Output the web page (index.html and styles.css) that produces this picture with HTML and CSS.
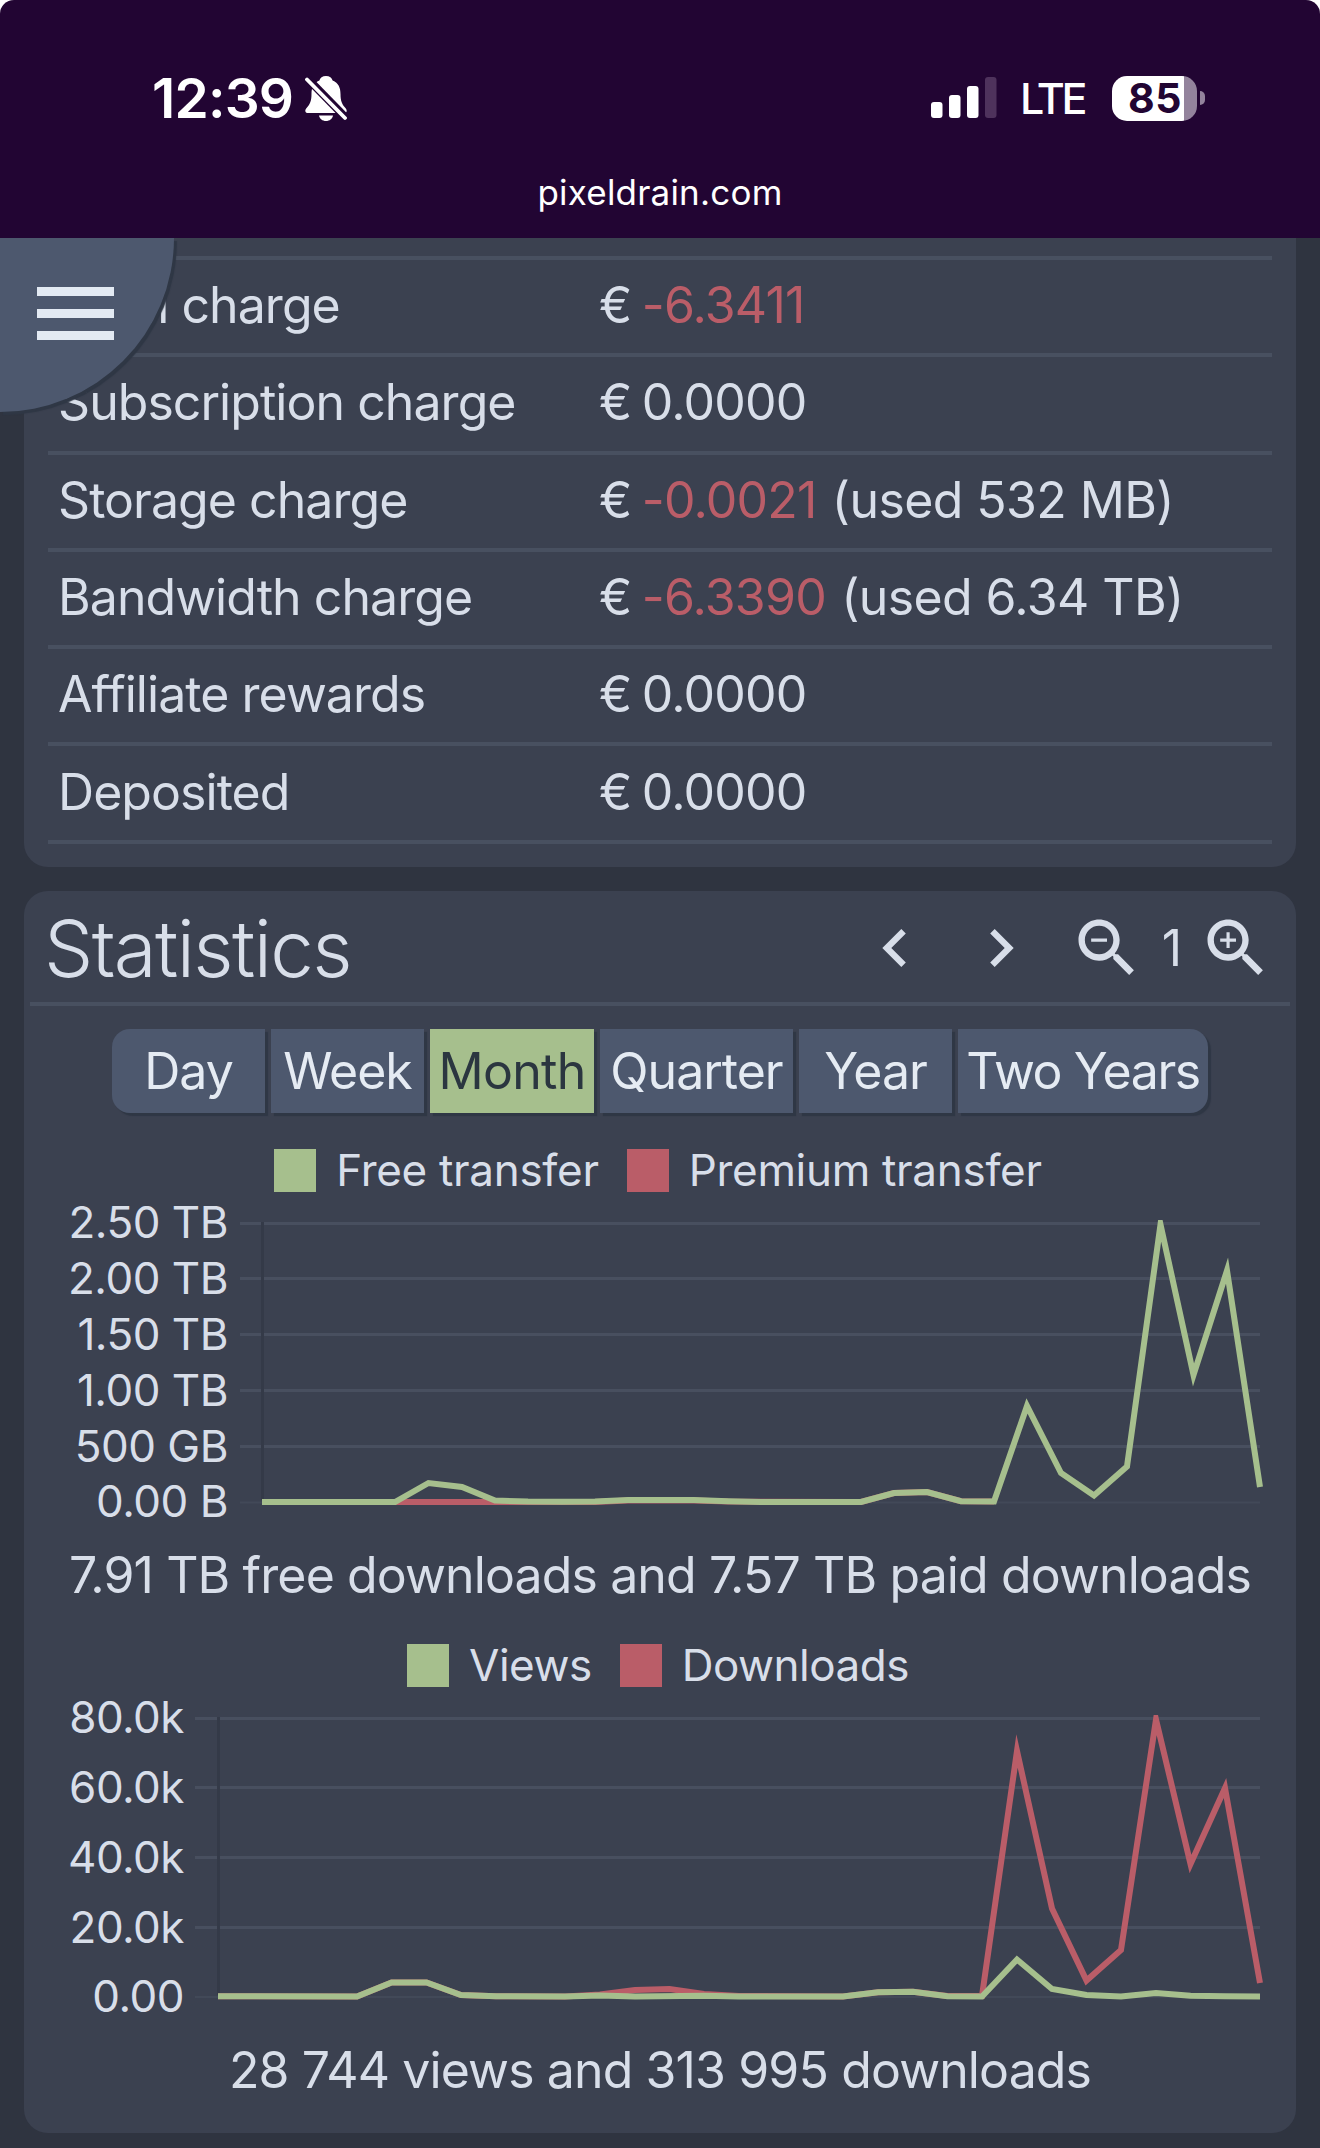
FILE: index.html
```
<!DOCTYPE html>
<html lang="en">
<head>
<meta charset="UTF-8" />
<meta name="viewport" content="width=device-width, initial-scale=1" />
<title>pixeldrain.com</title>
<link rel="stylesheet" href="styles.css">
</head>
<body>

<header class="phone-bar">
  <div class="status-row">
    <div class="clock">
      <span class="time">12:39</span>
      <svg class="bell" viewBox="0 0 42 45" aria-label="Silent">
        <path fill="#fff" d="M21 0c-3.600 0-6 2-6.600 4.600C8.500 7 6.500 12 6.500 18c0 7-1.500 10-4.500 13.500-1.200 1.500-2 2.800-1.600 4C.8 36.500 1.700 37 3 37h36c1.300 0 2.200-.5 2.600-1.500.4-1.200-.4-2.500-1.600-4-3-3.500-4.500-6.500-4.500-13.500 0-6-2-11-7.900-13.400C27 2 24.600 0 21 0z"/>
        <path fill="#fff" d="M14 39.500h14c-.6 3.300-3.500 5.500-7 5.500s-6.400-2.200-7-5.500z"/>
        <path stroke="#220533" stroke-width="8" d="M1.500 1.500l40 41"/>
        <path stroke="#fff" stroke-width="3.800" stroke-linecap="round" d="M2 3.500l38 38.500"/>
      </svg>
    </div>
    <div class="signals">
      <svg class="bars" viewBox="0 0 66 42" aria-label="Signal">
        <rect x="0" y="25" width="11.500" height="16" rx="3" fill="#fff"/>
        <rect x="18" y="18" width="11.500" height="23" rx="3" fill="#fff"/>
        <rect x="36" y="9" width="11.500" height="32" rx="3" fill="#fff"/>
        <rect x="54" y="0" width="11.500" height="41" rx="3" fill="#4e325c"/>
      </svg>
      <span class="lte">LTE</span>
      <div class="battery"><span>85</span></div>
      <div class="battery-tip"></div>
    </div>
  </div>
  <div class="address">pixeldrain.com</div>
</header>

<button class="menu-btn" aria-label="Menu">
  <span></span>
  <span></span>
  <span></span>
</button>

<main>
  <section class="panel charges">
    <table>
      <tr><td>Total charge</td><td>€ <span class="amount red">-6.3411</span></td></tr>
      <tr><td>Subscription charge</td><td>€ <span class="amount">0.0000</span></td></tr>
      <tr><td>Storage charge</td><td>€ <span class="amount red">-0.0021</span> <span class="used">(used 532 MB)</span></td></tr>
      <tr><td>Bandwidth charge</td><td>€ <span class="amount red">-6.3390</span> <span class="used">(used 6.34 TB)</span></td></tr>
      <tr><td>Affiliate rewards</td><td>€ <span class="amount">0.0000</span></td></tr>
      <tr><td>Deposited</td><td>€ <span class="amount">0.0000</span></td></tr>
    </table>
  </section>

  <section class="panel stats">
    <div class="stats-header">
      <h2>Statistics</h2>
      <div class="tools">
        <svg class="icon" viewBox="0 0 24 24"><path d="M15.410 7.410L14 6l-6 6 6 6 1.410-1.410L10.830 12z"/></svg>
        <svg class="icon" viewBox="0 0 24 24"><path d="M10 6L8.590 7.410 13.170 12l-4.580 4.590L10 18l6-6z"/></svg>
        <svg class="icon" viewBox="0 0 24 24"><path d="M15.500 14h-.79l-.28-.27C15.410 12.590 16 11.110 16 9.500 16 5.910 13.090 3 9.500 3S3 5.910 3 9.500 5.910 16 9.500 16c1.610 0 3.090-.59 4.230-1.570l.27.28v.79l5 4.990L20.490 19l-4.990-5zm-6 0C7.010 14 5 11.990 5 9.500S7.010 5 9.500 5 14 7.010 14 9.500 11.990 14 9.500 14zM7 9h5v1H7z"/></svg>
        <span class="level">1</span>
        <svg class="icon" viewBox="0 0 24 24"><path d="M15.500 14h-.79l-.28-.27C15.410 12.590 16 11.110 16 9.500 16 5.910 13.090 3 9.500 3S3 5.910 3 9.500 5.910 16 9.500 16c1.610 0 3.090-.59 4.230-1.570l.27.28v.79l5 4.990L20.490 19l-4.990-5zm-6 0C7.010 14 5 11.990 5 9.500S7.010 5 9.500 5 14 7.010 14 9.500 11.990 14 9.500 14zm2.500-4h-2v2H9v-2H7V9h2V7h1v2h2v1z"/></svg>
      </div>
    </div>

    <div class="tabs">
      <button>Day</button>
      <button>Week</button>
      <button class="active">Month</button>
      <button>Quarter</button>
      <button>Year</button>
      <button class="wide">Two Years</button>
    </div>

    <div class="legend legend-transfer">
      <i class="swatch green"></i><span>Free transfer</span>
      <i class="swatch pink"></i><span>Premium transfer</span>
    </div>

    <svg class="chart" viewBox="24 1195 1272 330">
      <defs><clipPath id="clipTransfer"><rect x="262" y="1220" width="1004" height="290"/></clipPath></defs>
      <g class="grid">
        <path d="M240 1223.500H1260M240 1278.500H1260M240 1334.500H1260M240 1390.500H1260M240 1446.500H1260"/>
        <path class="zero" d="M240 1502.500H1260"/>
        <path class="axis" d="M262.500 1222V1500"/>
      </g>
      <g class="labels">
        <text x="228" y="1238">2.50 TB</text>
        <text x="228" y="1294">2.00 TB</text>
        <text x="228" y="1350">1.50 TB</text>
        <text x="228" y="1406">1.00 TB</text>
        <text x="228" y="1462">500 GB</text>
        <text x="228" y="1517">0.00 B</text>
      </g>
      <g clip-path="url(#clipTransfer)">
        <polyline class="line pink" points="262,1502 595,1502 628,1500.500 694,1500.500 728,1501.500 861,1502 894,1493 927,1492 961,1501.200 994,1501.500"/>
        <polyline class="line green" points="262,1502 395,1502 428.500,1483 462,1487 495,1500.500 528,1501.500 562,1501.700 595,1501.500 628,1500 661,1500 694,1500 728,1501.300 761,1502 861,1502 894,1493 927,1492 961,1501.200 994,1501.500 1027,1406 1061,1473 1094,1495.500 1127,1466.500 1160.500,1224.500 1193.500,1375 1227,1270.500 1260,1487"/>
      </g>
    </svg>
    <p class="summary">7.91 TB free downloads and 7.57 TB paid downloads</p>

    <div class="legend legend-views">
      <i class="swatch green"></i><span>Views</span>
      <i class="swatch pink"></i><span>Downloads</span>
    </div>

    <svg class="chart" viewBox="24 1690 1272 330">
      <defs><clipPath id="clipViews"><rect x="218" y="1715" width="1048" height="290"/></clipPath></defs>
      <g class="grid">
        <path d="M195 1718.500H1260M195 1787.500H1260M195 1857.500H1260M195 1927.500H1260"/>
        <path class="zero" d="M195 1997H1260"/>
        <path class="axis" d="M218.500 1717V1995"/>
      </g>
      <g class="labels">
        <text x="184" y="1733">80.0k</text>
        <text x="184" y="1803">60.0k</text>
        <text x="184" y="1873">40.0k</text>
        <text x="184" y="1943">20.0k</text>
        <text x="184" y="2012">0.00</text>
      </g>
      <g clip-path="url(#clipViews)">
        <polyline class="line pink" points="218,1996.200 357,1996.500 391.600,1982.500 426.500,1982.500 461,1995 496,1996.200 565,1996.400 600,1994.500 635,1990 669.500,1989 704,1994 739,1996 843,1996.500 878,1992.300 913,1991.700 947.500,1996 982,1996 1017,1751 1052,1908.500 1086.500,1980.500 1121,1950 1156,1719.500 1190.500,1864 1225,1788 1260,1983"/>
        <polyline class="line green" points="218,1996.200 357,1996.500 391.600,1982.500 426.500,1982.500 461,1995 496,1996.200 565,1996.400 600,1995.500 635,1996.500 704,1995.800 739,1996.500 843,1996.500 878,1992.300 913,1991.700 947.500,1996.300 982,1996.500 1017,1959.500 1052,1989 1086.500,1995 1121,1996.500 1156,1993 1190.500,1995.800 1225,1996.300 1260,1996.500"/>
      </g>
    </svg>
    <p class="summary">28 744 views and 313 995 downloads</p>
  </section>
</main>

</body>
</html>
```
FILE: styles.css
```
html {
  background: #fff;
}

body {
  font-family: Inter, "Liberation Sans", sans-serif;
  font-size: 50px;
  letter-spacing: -0.8px;
  margin: 0;
  width: 1320px;
  height: 2148px;
  overflow: hidden;
  color: #d8dee9;
}

/* Phone status bar */
.phone-bar {
  box-sizing: border-box;
  height: 238px;
  padding-top: 66px;
  background: #220533;
  border-radius: 14px 14px 0 0;
  color: #fff;
}

.status-row {
  display: flex;
  justify-content: space-between;
  height: 64px;
  padding: 0 115px 0 152px;
}

.clock,
.signals {
  display: flex;
  align-items: center;
}

.time {
  font-size: 55px;
  font-weight: 600;
  line-height: 64px;
  letter-spacing: -0.8px;
}

.bell {
  width: 42px;
  height: 45px;
  margin-left: 12px;
}

.bars {
  width: 66px;
  height: 42px;
}

.lte {
  font-size: 43px;
  font-weight: 500;
  letter-spacing: -3.4px;
  margin-left: 23px;
}

.battery {
  width: 85px;
  height: 45px;
  margin-left: 28px;
  border-radius: 15px;
  background: linear-gradient(to right, #fff 72px, #93839c 72px);
  color: #220533;
  font-size: 41px;
  font-weight: 700;
  letter-spacing: 0.5px;
  line-height: 44px;
}

.battery span {
  margin-left: 16px;
}

.battery-tip {
  width: 5px;
  height: 14px;
  margin-left: 3px;
  border-radius: 0 5px 5px 0;
  background: #93839c;
}

.address {
  margin-top: 41px;
  font-size: 35px;
  letter-spacing: 0.2px;
  line-height: 42px;
  text-align: center;
}

/* Menu button, floats over the page */
.menu-btn {
  position: absolute;
  top: 238px;
  left: 0;
  width: 174px;
  height: 174px;
  display: flex;
  flex-direction: column;
  gap: 13px;
  padding: 49px 0 0 37px;
  border: none;
  border-radius: 0 0 174px 0;
  background: #4d586e;
  box-shadow: 3px 3px 1px #2f3745;
  clip-path: inset(0 -10px -10px 0);
}

.menu-btn span {
  width: 77px;
  height: 9px;
  background: #e3eaf3;
}

/* Page */
main {
  display: flex;
  flex-direction: column;
  gap: 24px;
  box-sizing: border-box;
  height: 1910px;
  padding: 0 24px;
  background: #2f3440;
}

.panel {
  box-sizing: border-box;
  background: #3b4150;
  border-radius: 24px;
}

.charges {
  height: 629px;
  padding: 18px 24px 0;
  border-radius: 0 0 24px 24px;
}

.charges table {
  width: 100%;
  table-layout: fixed;
  border-collapse: collapse;
  border-top: 4px solid #485060;
}

.charges td {
  height: 97.3px;
  padding: 0 11px 3px;
  box-sizing: border-box;
  border-bottom: 4px solid #485060;
  line-height: 60px;
  white-space: nowrap;
}

.charges td:first-child {
  width: 540px;
  padding-left: 10px;
  letter-spacing: -0.95px;
}

.amount {
  margin-left: -3px;
}

.used {
  margin-left: 2px;
  letter-spacing: -0.6px;
}

.red {
  color: #ba5d68;
}

/* Statistics */
.stats {
  height: 1242px;
}

.stats-header {
  display: flex;
  justify-content: space-between;
  align-items: center;
  box-sizing: border-box;
  height: 115px;
  margin: 0 6px;
  padding: 0 16px 0 18px;
  border-bottom: 4px solid #485060;
}

.stats-header h2 {
  margin: 3px 0 0 -4px;
  font-size: 78px;
  font-weight: 300;
  letter-spacing: -1.6px;
}

.tools {
  display: flex;
  align-items: center;
  margin-top: 3px;
}

.icon {
  width: 76px;
  height: 76px;
  margin-left: 30px;
  fill: #d8dee9;
}

.level {
  width: 53px;
  text-align: center;
}

.level + .icon {
  margin-left: 0;
}

.tabs {
  display: grid;
  grid-template-columns: 153px 153px 164px 193px 153px 250px;
  gap: 6px;
  justify-content: center;
  margin-top: 23px;
}

.tabs button {
  height: 84px;
  padding: 0;
  border: none;
  background: #4d586e;
  box-shadow: 3px 3px 1px #2f3745;
  color: #e5ebf3;
  font: inherit;
  letter-spacing: -1px;
}

.tabs button.active {
  background: #a6bf8d;
  color: #2b3640;
  letter-spacing: -0.7px;
}

.tabs button.wide {
  letter-spacing: -1.4px;
}

.tabs button:first-child {
  border-radius: 18px 0 0 18px;
}

.tabs button:last-child {
  border-radius: 0 18px 18px 0;
}

.legend {
  display: flex;
  justify-content: center;
  align-items: center;
  height: 44px;
  padding-right: 4px;
  font-size: 44px;
  letter-spacing: -0.3px;
}

.legend-transfer {
  margin-top: 35px;
}

.legend-views {
  margin-top: 36px;
  letter-spacing: -0.5px;
}

.swatch {
  width: 42px;
  height: 43px;
  margin-right: 20px;
}

.legend span + .swatch {
  margin-left: 28px;
}

.swatch.green {
  background: #a6bf8d;
}

.swatch.pink {
  background: #ba5d68;
}

/* Charts */
.chart {
  display: block;
  width: 1272px;
  height: 330px;
  margin-top: 3px;
}

.grid path {
  fill: none;
  stroke: #484f5f;
  stroke-width: 3;
}

.grid .zero {
  stroke: #424958;
  stroke-width: 2;
}

.grid .axis {
  stroke: #343a48;
}

.labels text {
  fill: #d8dee9;
  font-size: 44px;
  letter-spacing: -0.5px;
  text-anchor: end;
}

.line {
  fill: none;
  stroke-width: 6;
  stroke-miterlimit: 10;
}

.line.green {
  stroke: #a6bf8d;
}

.line.pink {
  stroke: #ba5d68;
}

.summary {
  height: 82px;
  margin: 0;
  line-height: 100px;
  letter-spacing: -0.88px;
  text-align: center;
}
```
